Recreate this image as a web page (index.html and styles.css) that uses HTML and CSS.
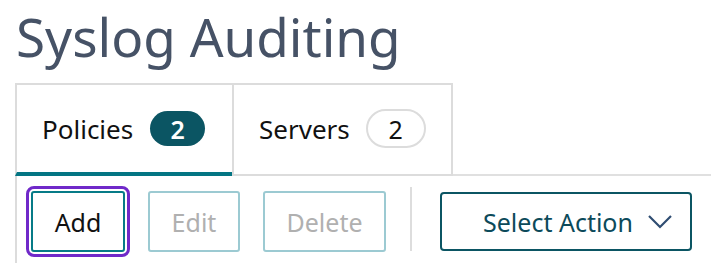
FILE: index.html
```html
<!DOCTYPE html>
<html>
<head>
    <title>Syslog Auditing</title>
    <link rel="stylesheet" href="styles.css">
</head>
<body>
    <h1 class="page-title">Syslog Auditing</h1>

    <!-- Tabs -->
    <div class="tabs">
        <div class="tab tab-active">
            <span>Policies</span>
            <span class="count count-filled">2</span>
        </div>
        <div class="tab">
            <span>Servers</span>
            <span class="count count-outline">2</span>
        </div>
        <div class="tab-fill"></div>
    </div>

    <!-- Toolbar -->
    <div class="panel">
        <button class="btn btn-focus btn-add">Add</button>
        <button class="btn btn-disabled btn-edit">Edit</button>
        <button class="btn btn-disabled btn-delete">Delete</button>
        <div class="divider"></div>
        <button class="select">
            <span>Select Action</span>
            <svg width="24" height="14" viewBox="0 0 24 14">
                <path d="M 1 1 L 12 12 L 23 1" fill="none" stroke="#2f4d72" stroke-width="2.2"/>
            </svg>
        </button>
    </div>
</body>
</html>
```

FILE: styles.css
```css
body {
    margin: 0;
    font-family: "Noto Sans", sans-serif;
    background: white;
    overflow: hidden;
}

.page-title {
    margin: 0;
    padding: 0 0 0 16px;
    height: 83px;
    font-size: 53px;
    font-weight: 400;
    line-height: 74px;
    color: #465266;
}

.tabs {
    display: flex;
    margin-left: 15px;
    height: 93px;
}

.tab {
    display: flex;
    align-items: center;
    gap: 17px;
    box-sizing: border-box;
    border-top: 2px solid #dcdcdc;
    border-left: 2px solid #dcdcdc;
    border-bottom: 2px solid #dcdcdc;
    padding: 0 0 2px 25px;
    width: 217px;
    font-size: 26px;
    color: #111111;
}

.tab + .tab {
    border-right: 2px solid #dcdcdc;
    width: 221px;
    gap: 16px;
}

.tab-active {
    border-bottom: 4px solid #037583;
    padding-bottom: 0;
}

.tab-fill {
    flex: 1;
    border-bottom: 2px solid #e0e0e0;
}

.count {
    box-sizing: border-box;
    display: inline-flex;
    align-items: center;
    justify-content: center;
    border-radius: 18px;
    font-size: 25px;
}

.count-filled {
    width: 55px;
    height: 35px;
    background: #0b5563;
    color: white;
    font-weight: 600;
}

.count-outline {
    width: 60px;
    height: 39px;
    border: 2px solid #dcdcdc;
    border-radius: 20px;
}

.panel {
    display: flex;
    align-items: flex-start;
    margin-left: 15px;
    border-left: 2px solid #dcdcdc;
    padding: 15px 0 0 14px;
    height: 87px;
    box-sizing: border-box;
}

.btn {
    height: 61px;
    margin-right: 23px;
    padding: 0;
    border: 2px solid #9ccad2;
    border-radius: 3px;
    background: white;
    font-family: inherit;
    font-size: 25px;
    color: #b0b0b0;
}

.btn-add {
    width: 94px;
}

.btn-edit {
    width: 92px;
}

.btn-delete {
    width: 123px;
}

.btn-focus {
    border-color: #067b87;
    color: #111111;
    outline: 3px solid #7029c9;
    outline-offset: 2px;
}

.divider {
    width: 2px;
    height: 64px;
    margin: -4px 28px 0 1px;
    background: #dddddd;
}

.select {
    display: flex;
    align-items: center;
    justify-content: space-between;
    width: 252px;
    height: 59px;
    margin-top: 1px;
    padding: 0 18px 0 41px;
    border: 2px solid #0b5563;
    border-radius: 4px;
    background: white;
    font-family: inherit;
    font-size: 25px;
    color: #0c4a5a;
}
```
